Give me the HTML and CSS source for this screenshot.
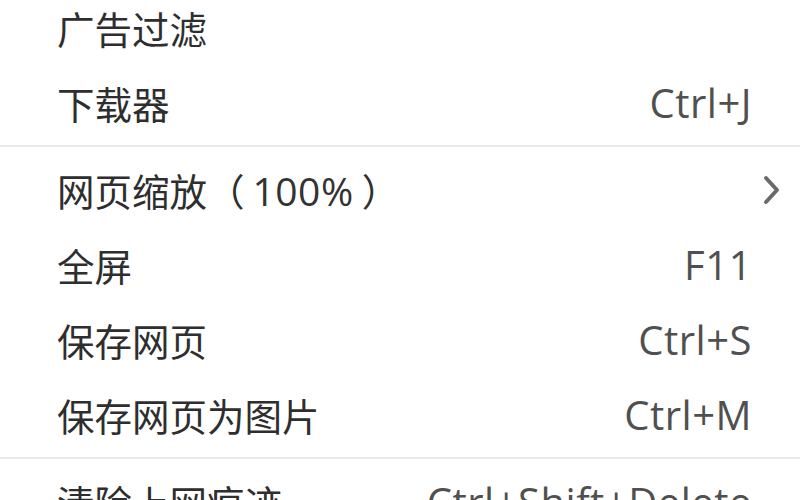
FILE: index.html
```html
<!DOCTYPE html>
<html lang="zh-CN">
<head>
<meta charset="utf-8">
<title>菜单</title>
<link rel="stylesheet" href="styles.css">
</head>
<body>
<div class="menu">
  <div class="item"><span class="label">广告过滤</span></div>
  <div class="item"><span class="label">下载器</span><span class="key">Ctrl+J</span></div>
  <div class="sep"></div>
  <div class="item"><span class="label">网页缩放（<span class="num">100%</span>）</span>
    <svg class="chev" width="22" height="36" viewBox="0 0 22 36"><path d="M6 6 L17 18 L6 30" fill="none" stroke="#6a6a6a" stroke-width="4" stroke-linecap="round" stroke-linejoin="round"/></svg>
  </div>
  <div class="item"><span class="label">全屏</span><span class="key">F11</span></div>
  <div class="item"><span class="label">保存网页</span><span class="key">Ctrl+S</span></div>
  <div class="item"><span class="label">保存网页为图片</span><span class="key">Ctrl+M</span></div>
  <div class="sep"></div>
  <div class="item"><span class="label">清除上网痕迹</span><span class="key">Ctrl+Shift+Delete</span></div>
</div>
</body>
</html>
```
FILE: styles.css
```css
html, body {
  margin: 0;
  padding: 0;
  background: #ffffff;
  overflow: hidden;
}
.menu {
  width: 800px;
  margin-top: -10px;
  font-family: "Open Sans", "Noto Sans CJK SC", sans-serif;
  color: #333333;
}
.item {
  height: 75px;
  display: flex;
  align-items: center;
  justify-content: space-between;
  padding: 0 48px 0 57px;
}
.label {
  font-family: "Noto Sans CJK SC", sans-serif;
  font-size: 37.5px;
  color: #2e2e2e;
}
.num {
  font-family: "Open Sans", sans-serif;
  font-size: 39px;
  letter-spacing: 0.5px;
  margin: 0 8px;
  color: #333333;
}
.key {
  font-family: "Open Sans", sans-serif;
  font-size: 40px;
  letter-spacing: 0.5px;
  color: #505050;
}
.chev {
  margin-right: -30px;
}
.sep {
  height: 12px;
  display: flex;
  align-items: center;
}
.sep::before {
  content: "";
  display: block;
  width: 100%;
  height: 2px;
  background: #ebebeb;
}
```
